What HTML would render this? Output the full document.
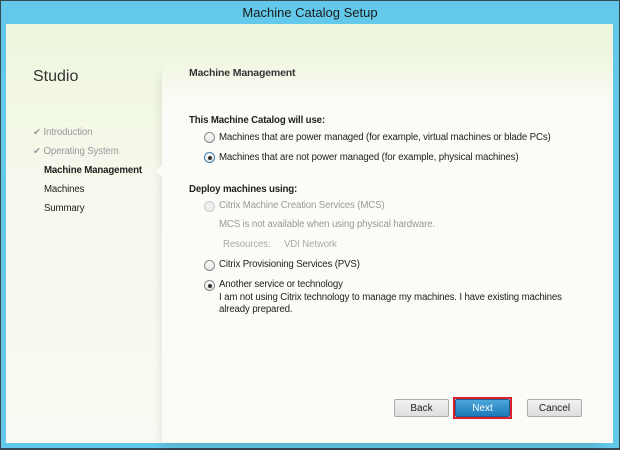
<!DOCTYPE html><html><head><style>
*{margin:0;padding:0;box-sizing:border-box}
body{width:620px;height:450px;background:#3a4650;font-family:"Liberation Sans",sans-serif;font-size:9.7px;letter-spacing:-0.15px;color:#222;position:relative;overflow:hidden}
.frame{position:absolute;left:1px;top:1px;width:618px;height:447px;background:#62c9ea}
.title{position:absolute;left:0;top:5px;width:620px;text-align:center;font-size:13px;letter-spacing:0;color:#1a1a1a}
.content{position:absolute;left:6px;top:24px;width:607px;height:419px;background:linear-gradient(180deg,#eef6dc 0%,#f6f9ee 40%,#fafbf4 100%)}
.right{position:absolute;left:162px;top:60px;width:451px;height:383px;background:linear-gradient(180deg,rgba(251,252,247,0) 0%,#fbfcf7 12%);box-shadow:-6px 10px 10px -6px rgba(0,0,0,.12)}
.notch{position:absolute;left:156px;top:165px;width:0;height:0;border-top:6px solid transparent;border-bottom:6px solid transparent;border-right:6px solid #fbfcf7}
.t{position:absolute;white-space:nowrap}
.g{color:#9a9a9a}
.r{position:absolute;width:11px;height:11px;border-radius:50%;border:1px solid #8a8a8a;background:linear-gradient(#fff,#e4e4e4)}
.r.on::after{content:"";position:absolute;left:2.5px;top:2.5px;width:4px;height:4px;border-radius:50%;background:#333}
.r.on{border-color:#3c7fb1}
.r.dis{border-color:#ccc;background:#eee}
.btn{position:absolute;top:399px;height:18px;border:1px solid #acacac;background:linear-gradient(#f2f2f2,#dedede);text-align:center;line-height:17px;font-size:10px;letter-spacing:0;border-radius:2px}
</style></head><body>
<div class="frame"></div>
<div class="title">Machine Catalog Setup</div>
<div class="content"></div>
<div class="right"></div>
<div class="notch"></div>
<div class="t" style="left:33px;top:68px;font-size:16px;letter-spacing:0;color:#333">Studio</div>
<div class="t g" style="left:33px;top:127px"><span style="color:#999">✔</span> Introduction</div>
<div class="t g" style="left:33px;top:146px"><span style="color:#999">✔</span> Operating System</div>
<div class="t" style="left:44px;top:165px;font-weight:bold">Machine Management</div>
<div class="t" style="left:44px;top:184px">Machines</div>
<div class="t" style="left:44px;top:203px">Summary</div>
<div class="t" style="left:189px;top:67px;font-weight:bold;font-size:10.5px;color:#333">Machine Management</div>
<div class="t" style="left:189px;top:115px;font-weight:bold">This Machine Catalog will use:</div>
<div class="r" style="left:204px;top:132px"></div>
<div class="t" style="left:219px;top:132px">Machines that are power managed (for example, virtual machines or blade PCs)</div>
<div class="r on" style="left:204px;top:152px"></div>
<div class="t" style="left:219px;top:152px">Machines that are not power managed (for example, physical machines)</div>
<div class="t" style="left:189px;top:184px;font-weight:bold">Deploy machines using:</div>
<div class="r dis" style="left:204px;top:201px"></div>
<div class="t g" style="left:219px;top:200px">Citrix Machine Creation Services (MCS)</div>
<div class="t g" style="left:219px;top:219px">MCS is not available when using physical hardware.</div>
<div class="t" style="left:223px;top:239px;color:#aaa">Resources:</div>
<div class="t" style="left:284px;top:239px;color:#aaa">VDI Network</div>
<div class="r" style="left:204px;top:260px"></div>
<div class="t" style="left:219px;top:259px">Citrix Provisioning Services (PVS)</div>
<div class="r on" style="left:204px;top:280px;border-color:#8a8a8a"></div>
<div class="t" style="left:219px;top:279px">Another service or technology</div>
<div class="t" style="left:219px;top:292px">I am not using Citrix technology to manage my machines. I have existing machines</div>
<div class="t" style="left:219px;top:304px">already prepared.</div>
<div class="btn" style="left:394px;width:55px">Back</div>
<div style="position:absolute;left:453px;top:397px;width:59px;height:22px;border:2px solid #d8202a"></div>
<div class="btn" style="left:455px;width:55px;top:399px;background:linear-gradient(#4ba7dc,#1d79b8);border-color:#1a5f94;color:#fff">Next</div>
<div class="btn" style="left:527px;width:55px">Cancel</div>
</body></html>
